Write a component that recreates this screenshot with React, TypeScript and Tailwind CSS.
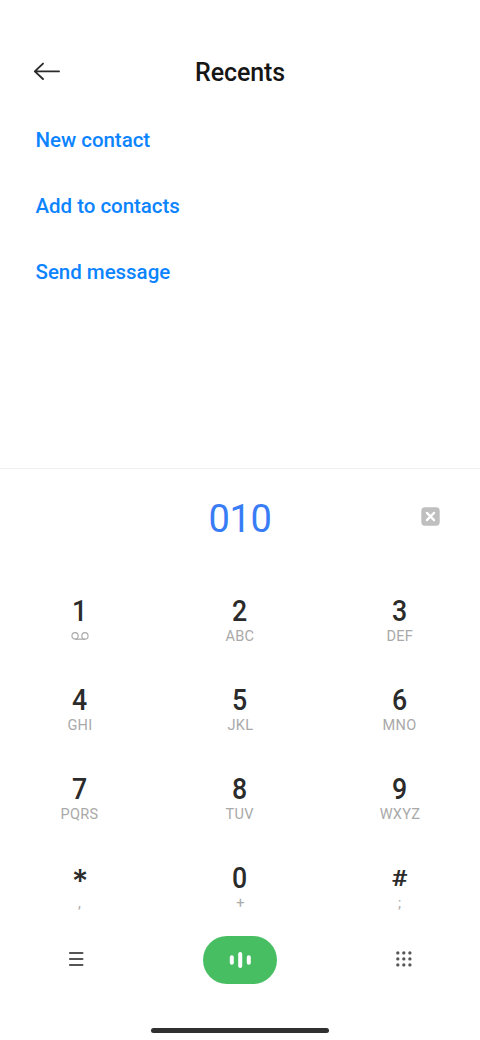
import clsx from "clsx";

const actions = ["New contact", "Add to contacts", "Send message"];

const keys = [
  { digit: "1", sub: "" },
  { digit: "2", sub: "ABC" },
  { digit: "3", sub: "DEF" },
  { digit: "4", sub: "GHI" },
  { digit: "5", sub: "JKL" },
  { digit: "6", sub: "MNO" },
  { digit: "7", sub: "PQRS" },
  { digit: "8", sub: "TUV" },
  { digit: "9", sub: "WXYZ" },
  { digit: "*", sub: "," },
  { digit: "0", sub: "+" },
  { digit: "#", sub: ";" },
];

function Voicemail() {
  return (
    <svg
      width="20"
      height="16"
      viewBox="0 0 20 16"
      fill="none"
      stroke="#a9a9a9"
      strokeWidth="1.2"
    >
      <circle cx="4.9" cy="7.9" r="3.2" />
      <circle cx="15.1" cy="7.9" r="3.2" />
      <path d="M4.9 11.2h10.2" />
    </svg>
  );
}

function Key({ digit, sub }: { digit: string; sub: string }) {
  return (
    <button className="flex h-[89px] flex-col items-center">
      <span
        className={clsx(
          "flex h-[34px] items-center text-[#2b2b2b]",
          digit === "*" && "pt-[8px] font-['Inter',sans-serif] text-[32px] leading-none font-medium",
          digit === "#" && "scale-x-[1.22] pt-[1px] text-[22px] leading-none font-semibold",
          digit !== "*" && digit !== "#" && "scale-x-[0.89] text-[30px] leading-none font-medium",
        )}
      >
        {digit}
      </span>
      <span className="flex h-4 scale-x-[0.97] items-center text-[15px] leading-none tracking-[0.3px] text-[#a9a9a9]">
        {sub || <Voicemail />}
      </span>
    </button>
  );
}

export default function App() {
  return (
    <div className="flex h-[1040px] w-[480px] flex-col overflow-hidden bg-white font-['Roboto',sans-serif]">
      <div className="flex h-[468px] flex-col">
        <header className="mt-[48px] grid h-12 grid-cols-3 items-center">
          <button className="pl-[33px]" aria-label="Back">
            <svg
              width="28"
              height="20"
              viewBox="0 0 28 20"
              fill="none"
              stroke="#2b2b2b"
              strokeWidth="1.9"
              strokeLinecap="round"
            >
              <path d="M26 9.4H2M10 1.6L1.8 9.4L10 17" strokeLinejoin="round" />
            </svg>
          </button>
          <h1 className="text-center text-[25px] leading-none font-medium tracking-[-0.1px] text-[#161616]">
            Recents
          </h1>
        </header>
        <nav className="mt-[12px] flex flex-col items-start pl-[35.5px]">
          {actions.map((label) => (
            <button
              key={label}
              className="h-[65.7px] text-[20.5px] font-medium tracking-[-0.03px] text-[#0d84ff]"
            >
              {label}
            </button>
          ))}
        </nav>
      </div>
      <div className="grid h-[100px] grid-cols-3 items-center border-t border-[#efefef]">
        <span className="col-start-2 text-center text-[38px] leading-none tracking-[-0.4px] text-[#387df6]">
          010
        </span>
        <button className="pb-[4px] pl-[101px]" aria-label="Delete">
          <svg width="19" height="19" viewBox="0 0 19 19">
            <rect x="0.3" y="0.3" width="18.4" height="18.4" rx="3.6" fill="#bfbfbf" />
            <path
              d="M5.9 5.9l7.2 7.2M13.1 5.9l-7.2 7.2"
              stroke="#fff"
              strokeWidth="2.3"
              strokeLinecap="round"
            />
          </svg>
        </button>
      </div>
      <div className="mt-[26px] grid grid-cols-3">
        {keys.map((key) => (
          <Key key={key.digit} {...key} />
        ))}
      </div>
      <div className="-mt-[14px] grid h-12 grid-cols-3 items-center">
        <button className="pb-[2px] pl-[67.5px]" aria-label="Menu">
          <svg
            width="16"
            height="16"
            viewBox="0 0 16 16"
            stroke="#555"
            strokeWidth="2"
            strokeLinecap="round"
          >
            <path d="M1.9 1.9h12.6M1.9 7.9h12.6M1.9 13.9h12.6" />
          </svg>
        </button>
        <button
          className="flex h-[48px] w-[74px] items-center justify-center justify-self-center rounded-full bg-[#48be63]"
          aria-label="Call"
        >
          <svg
            width="22"
            height="18"
            viewBox="0 0 22 18"
            stroke="#fff"
            strokeWidth="4"
            strokeLinecap="round"
          >
            <path d="M2.8 6.2v5.6M11.2 2.9v12.2M19.8 6.2v5.6" />
          </svg>
        </button>
        <button className="pb-[2px] pl-[75px]" aria-label="Keypad">
          <svg width="18" height="16" viewBox="0 0 18 16" fill="#555">
            {[1.9, 7.9, 13.9].map((y) =>
              [2.8, 8.8, 14.9].map((x) => (
                <circle key={`${x}-${y}`} cx={x} cy={y} r="1.65" />
              )),
            )}
          </svg>
        </button>
      </div>
      <div className="mx-auto mt-[44px] h-[4.5px] w-[178px] rounded-full bg-[#303030]" />
    </div>
  );
}
